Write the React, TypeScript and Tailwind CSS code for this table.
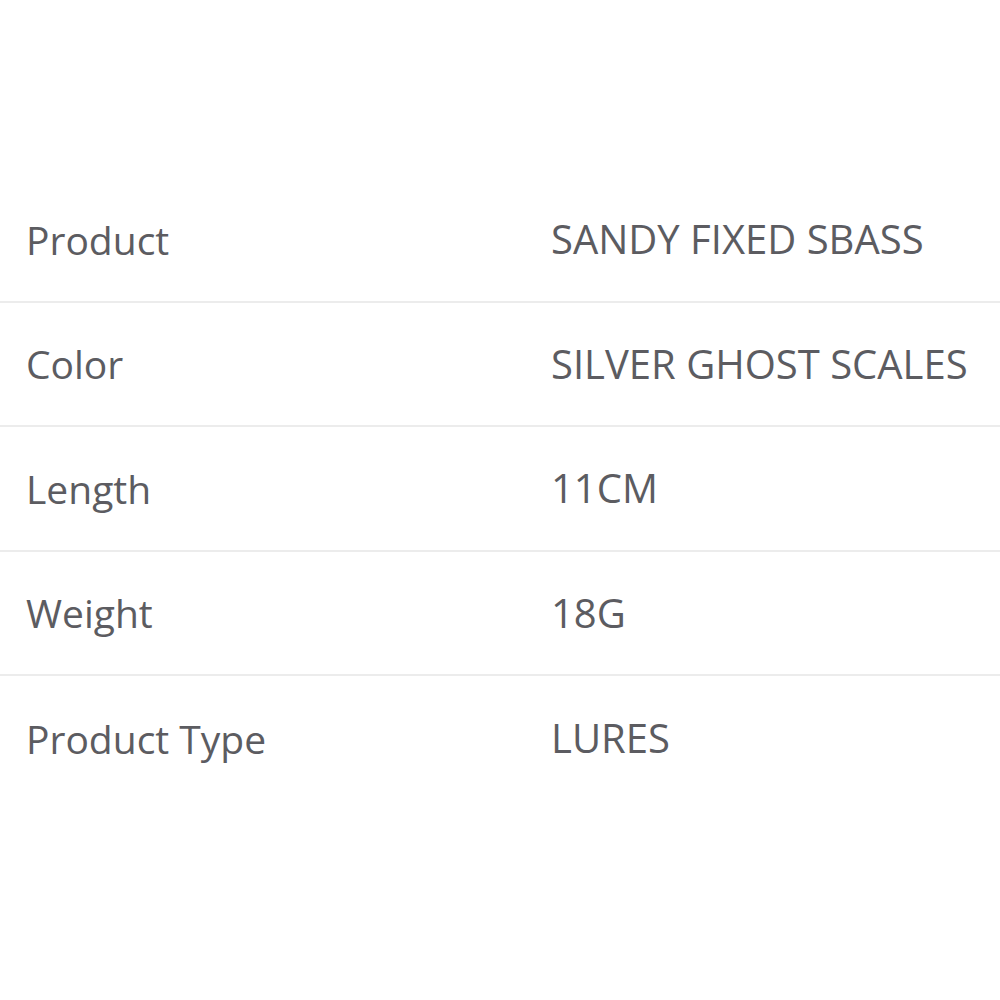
const rows = [
  { label: "Product", value: "SANDY FIXED SBASS" },
  { label: "Color", value: "SILVER GHOST SCALES" },
  { label: "Length", value: "11CM" },
  { label: "Weight", value: "18G" },
  { label: "Product Type", value: "LURES" },
];

export default function App() {
  return (
    <div className="w-[1000px] h-[1000px] bg-white pt-[178px] font-['Open_Sans',sans-serif] text-[#5c5c61]">
      {rows.map((row, i) => (
        <div
          key={row.label}
          className={`grid grid-cols-[551px_1fr] items-center h-[124.5px] ${
            i < rows.length - 1 ? "border-b-2 border-[#ececec]" : ""
          }`}
        >
          <div className="pl-[26px] text-[39px] leading-none">{row.label}</div>
          <div className="text-[40px] leading-none whitespace-nowrap">{row.value}</div>
        </div>
      ))}
    </div>
  );
}
